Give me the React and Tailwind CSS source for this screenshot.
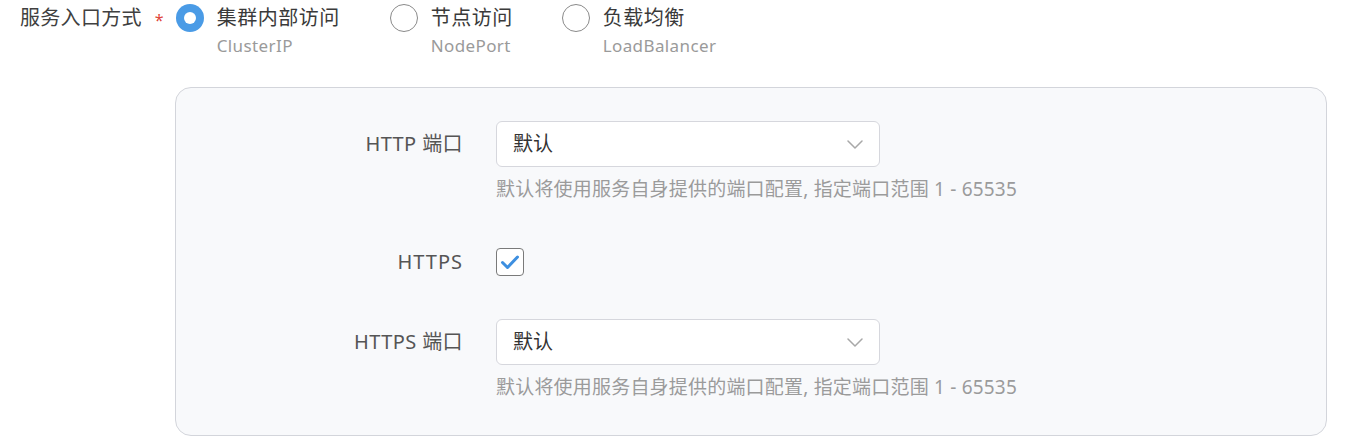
import React from "react";

const font = { fontFamily: '"Noto Sans", "Noto Sans CJK SC", sans-serif' };

function Radio({ checked }) {
  return checked ? (
    <span className="flex h-[28px] w-[28px] shrink-0 items-center justify-center rounded-full bg-[#4a9be6]">
      <span className="block h-[12px] w-[12px] rounded-full bg-white" />
    </span>
  ) : (
    <span className="block h-[28px] w-[28px] shrink-0 rounded-full border border-[#8a8a8a] bg-white" />
  );
}

function RadioItem({ checked, title, sub, width }) {
  return (
    <div className={`flex items-start gap-[13px] ${width}`}>
      <div className="mt-[4px] shrink-0">
        <Radio checked={checked} />
      </div>
      <div className="flex flex-col">
        <span className="mt-[4px] text-[20px] leading-[28px] tracking-[0.5px] text-[#3a3a3a]">{title}</span>
        <span className="mt-[2px] text-[17px] leading-[24px] tracking-[0.4px] text-[#9a9a9a]">{sub}</span>
      </div>
    </div>
  );
}

function Chevron() {
  return (
    <svg width="16" height="9" viewBox="0 0 16 9" fill="none">
      <path d="M1 1l7 7 7-7" stroke="#a8a8a8" strokeWidth="1.5" strokeLinecap="round" strokeLinejoin="round" />
    </svg>
  );
}

function Select() {
  return (
    <div className="flex h-[46px] w-[384px] items-center justify-between rounded-[6px] border border-[#d6d7dd] bg-white pl-[16px] pr-[16px]">
      <span className="text-[20px] text-[#333]">默认</span>
      <Chevron />
    </div>
  );
}

const hint = "默认将使用服务自身提供的端口配置, 指定端口范围 1 - 65535";

export default function App() {
  return (
    <div className="h-[446px] w-[1358px] bg-white" style={font}>
      <div className="flex items-start">
        <div className="flex h-[36px] items-center pl-[20px]">
          <span className="text-[20px] tracking-[0.3px] text-[#404040]">服务入口方式</span>
          <span className="ml-[13px] mt-[4px] text-[16px] text-[#e0453a]">*</span>
        </div>
        <div className="ml-[12px] flex items-start">
          <RadioItem checked title="集群内部访问" sub="ClusterIP" width="w-[214px]" />
          <RadioItem title="节点访问" sub="NodePort" width="w-[172px]" />
          <RadioItem title="负载均衡" sub="LoadBalancer" width="" />
        </div>
      </div>

      <div className="ml-[175px] mt-[29px] h-[349px] w-[1152px] rounded-[16px] border border-[#d3d5db] bg-[#f8f9fb] pt-[33px]">
        <div className="flex items-start">
          <div className="flex h-[46px] w-[287px] shrink-0 items-center justify-end text-[20px] tracking-[0.4px] text-[#555]">HTTP 端口</div>
          <div className="ml-[33px] flex flex-col">
            <Select />
            <span className="mt-[10px] text-[19px] leading-[24px] tracking-[0.2px] text-[#9b9b9b]">{hint}</span>
          </div>
        </div>

        <div className="mt-[46px] flex items-center">
          <div className="flex w-[287px] shrink-0 items-center justify-end text-[20px] tracking-[1px] text-[#555]">HTTPS</div>
          <div className="ml-[33px] flex h-[28px] w-[28px] items-center justify-center rounded-[4px] border border-[#7a7a7a] bg-white">
            <svg width="20" height="16" viewBox="0 0 20 16" fill="none">
              <path d="M2.5 8.5l5 5L17.5 3" stroke="#3d8fe0" strokeWidth="3" strokeLinecap="round" strokeLinejoin="round" />
            </svg>
          </div>
        </div>

        <div className="mt-[42px] flex items-start">
          <div className="flex h-[46px] w-[287px] shrink-0 items-center justify-end text-[20px] tracking-[0.4px] text-[#555]">HTTPS 端口</div>
          <div className="ml-[33px] flex flex-col">
            <Select />
            <span className="mt-[10px] text-[19px] leading-[24px] tracking-[0.2px] text-[#9b9b9b]">{hint}</span>
          </div>
        </div>
      </div>
    </div>
  );
}
